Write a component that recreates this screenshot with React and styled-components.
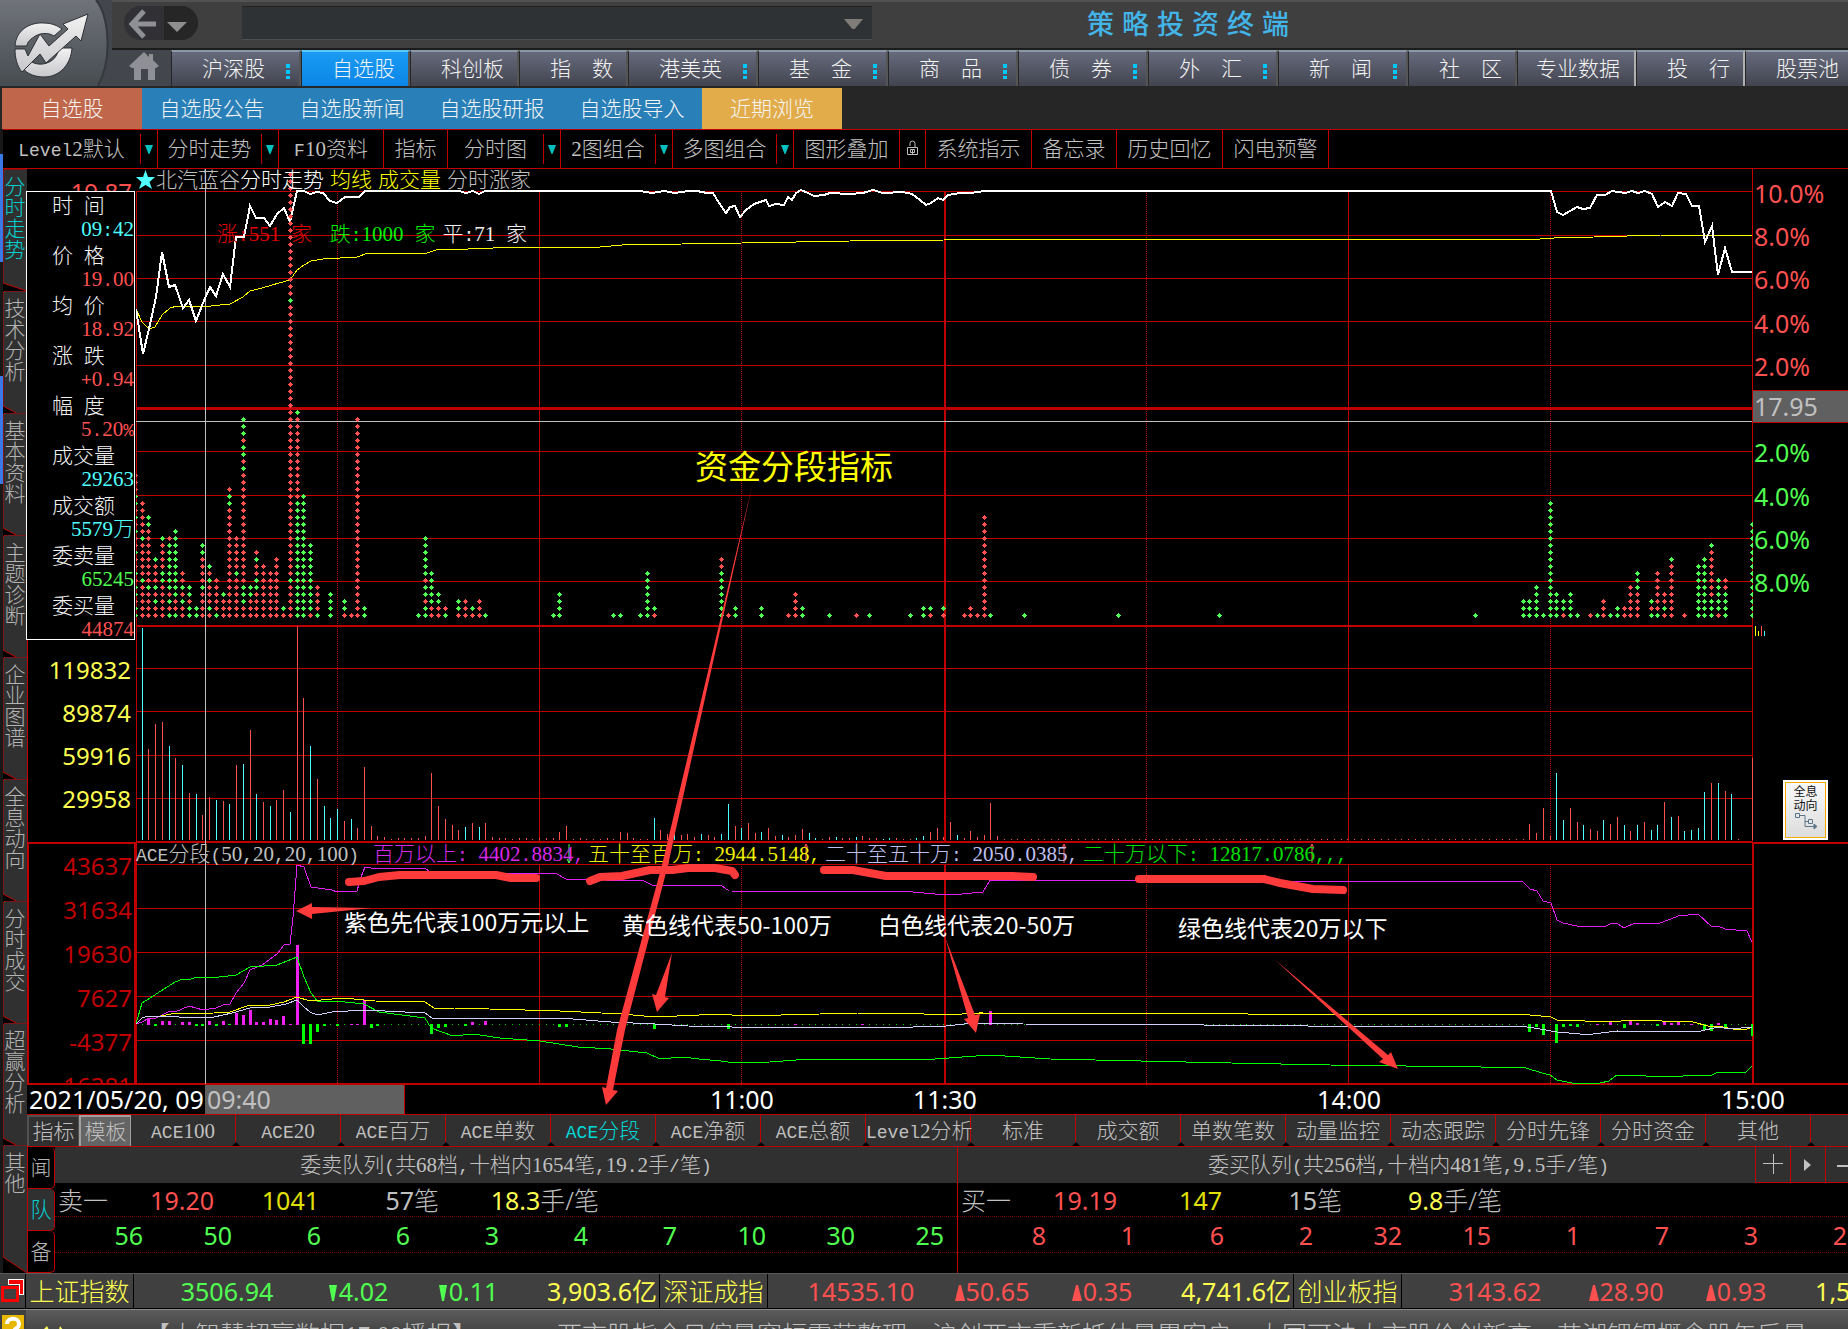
import React from 'react'
import styled, { createGlobalStyle, css } from 'styled-components'

const RED = '#c00000'
const SONG = '"Liberation Serif", "Noto Sans CJK SC", sans-serif'
const TAHOMA = '"Noto Sans", "Noto Sans CJK SC", sans-serif'

const GlobalStyle = createGlobalStyle`
  * {
    box-sizing: border-box;
  }
  body {
    margin: 0;
    background: #000;
    overflow: hidden;
  }
  button {
    margin: 0;
    padding: 0;
    border: none;
    background: none;
    color: inherit;
    font: inherit;
    cursor: pointer;
  }
`

const Page = styled.div`
  display: flex;
  flex-direction: column;
  height: 100vh;
  overflow: hidden;
  background: #000;
  color: #c0c0c0;
  font-family: ${SONG};
  font-size: 21px;
  font-weight: 300;
  line-height: 24px;
  white-space: pre;
`

// latin letters and punctuation take half of a full width character
const Half = styled.span`
  font-family: 'Liberation Mono', monospace;
  font-size: 18px;
  line-height: 1;
`

const Zh = ({ text }) =>
  text
    .split(/([\x20-\x2f\x3a-\x7e]+)/)
    .map((part, i) => (i % 2 ? <Half key={i}>{part}</Half> : part))

/* ---------- header ---------- */

const Header = styled.header`
  display: flex;
  flex: none;
  height: 88px;
  background: #3f3f3f;
  border-bottom: 2px solid #262626;
`

const HeaderMain = styled.div`
  display: flex;
  flex-direction: column;
  flex: 1;
  min-width: 0;
`

const TitleRow = styled.div`
  display: flex;
  align-items: center;
  height: 48px;
  padding-left: 12px;
  padding-bottom: 4px;
  border-top: 2px solid #525252;
`

const History = styled.div`
  display: flex;
  width: 74px;
  height: 34px;
  border-radius: 17px;
  overflow: hidden;
  background: #303035;

  button + button {
    background: #262626;
  }
`

const Picker = styled.label`
  position: relative;
  width: 630px;
  margin-left: 44px;
  height: 34px;

  select {
    width: 100%;
    height: 100%;
    appearance: none;
    border: none;
    border-top: 1px solid #222;
    border-bottom: 1px solid #4a4e50;
    background: #2e3234;
    color: #c0c0c0;
  }
  svg {
    position: absolute;
    right: 9px;
    top: 13px;
  }
`

const Brand = styled.h1`
  display: flex;
  gap: 8px;
  margin: 0 0 0 215px;
  color: #43b4e8;
  font-family: 'Noto Sans CJK SC', sans-serif;
  font-size: 27px;
  font-weight: 500;
  line-height: 32px;
`

const MainNav = styled.nav`
  display: flex;
  height: 38px;
  border-top: 2px solid #1c1c1c;
`

const HomeButton = styled.button`
  width: 59px;
  flex: none;
  padding-left: 16px;
  text-align: left;
  background: #43474d;
`

const MainTab = styled.button`
  position: relative;
  flex: none;
  width: ${({ $w }) => $w}px;
  padding-left: ${({ $w }) => ($w === 119 ? 18 : 30)}px;
  border-top: 2px solid #8a98a8;
  border-right: 2px solid ${({ $light }) => ($light ? '#b0b0b0' : '#555')};
  border-left: 1px solid #262626;
  background: linear-gradient(#666a7c, #42444f);
  color: #f4f4f4;
  text-align: left;

  ${({ $active }) =>
    $active &&
    css`
      border-top-color: #5cc8f8;
      background: linear-gradient(#1b9bf2, #0a86e8);
    `}
`

const Dots = styled.span`
  position: absolute;
  right: 9px;
  top: 12px;
  width: 4px;
  height: 15px;
  background: repeating-linear-gradient(#00c8ff 0 4px, transparent 4px 6px);
`

const SubNav = styled.nav`
  display: flex;
  flex: none;
  height: 41px;
  padding-left: 2px;
  background: #262626;
`

const subColors = { stock: '#c0664a', blue: '#2980b9', recent: '#e2ac4a' }

const SubTab = styled.button`
  width: 140px;
  background: ${({ $kind }) => subColors[$kind]};
  color: #f4f4f4;
`

/* ---------- tool bar and side tabs ---------- */

const Workspace = styled.div`
  display: flex;
  flex: none;
`

const Edge = styled.div`
  width: 3px;
  flex: none;
  background: linear-gradient(
    #181818 25px,
    #3b78e7 25px 133px,
    #181818 133px 247px,
    #3b78e7 247px 355px,
    #181818 355px
  );
`

const WorkMain = styled.div`
  flex: 1;
  min-width: 0;
`

const Toolbar = styled.div`
  display: flex;
  height: 40px;
  border-top: 1px solid ${RED};
  border-bottom: 1px solid ${RED};
`

const Tool = styled.button`
  flex: none;
  width: ${({ $w }) => $w}px;
  border-right: ${({ $menu }) => ($menu ? 'none' : `1px solid ${RED}`)};
`

const ToolMenu = styled.button`
  width: 17px;
  margin: 4px 0;
  border-left: 1px solid ${RED};
  line-height: 0;
`

const MenuEnd = styled.span`
  border-right: 1px solid ${RED};
`

const Body = styled.div`
  display: flex;
`

const Side = styled.nav`
  width: 24px;
  flex: none;
  background: #000;
`

const SideTab = styled.button`
  position: relative;
  display: block;
  width: 24px;
  height: ${({ $last }) => ($last ? 128 : 122)}px;
  line-height: 21px;
  color: ${({ $active }) => ($active ? '#00d0d0' : '#b4b4b4')};

  svg {
    position: absolute;
    left: 0;
    top: 0;
  }
  span {
    position: relative;
    display: block;
    height: 100%;
    padding-top: 8px;
    white-space: pre-line;
  }
`

const Content = styled.main`
  flex: 1;
  min-width: 0;
`

/* ---------- chart ---------- */

const ChartArea = styled.section`
  display: grid;
  grid-template-columns: 109px 1fr 95px;
  grid-template-rows: auto auto;
  font-family: ${TAHOMA};
`

const LeftAxis = styled.div`
  position: relative;
  grid-column: 1;
  grid-row: 1;
  display: flex;
  flex-direction: column;
  font-size: 24px;
  font-weight: 400;
  text-align: right;
`

const PriceTop = styled.div`
  height: 457px;
  padding: 8px 4px 0 0;
  line-height: 30px;
  color: #ff5050;
`

const VolumeLabels = styled.div`
  height: 216px;
  padding: 22px 5px 0 0;
  line-height: 43px;
  color: #ffff50;
  border-left: 1px solid ${RED};
`

const AceLabels = styled.div`
  height: 243px;
  overflow: hidden;
  padding-right: 2px;
  line-height: 44px;
  color: ${RED};
  border: 2px solid ${RED};
`

const InfoBox = styled.dl`
  position: absolute;
  left: -1px;
  top: 22px;
  width: 109px;
  height: 449px;
  margin: 0;
  border: 1px solid #fff;
  background: #000;
  font-family: ${SONG};
  font-size: 21px;
  font-weight: 300;
  line-height: 25px;
`

const InfoLabel = styled.dt`
  height: 25px;
  padding-left: 25px;
  line-height: 28px;
  text-align: left;
  color: #f4f4f4;
`

const InfoValue = styled.dd`
  height: 25px;
  margin: 0;
  color: ${({ $c }) => $c};
`

const PlotBox = styled.div`
  position: relative;
  grid-column: 2;
  grid-row: 1;
  font-family: ${SONG};

  > svg {
    display: block;
    width: 100%;
    height: 916px;
  }
`

const Tint = styled.span`
  color: ${({ $c }) => $c};
`

const Legend = styled.div`
  position: absolute;
  left: 0;
  top: 0;
  display: flex;
  align-items: center;
  gap: 6px;
  height: 22px;

  svg + span {
    margin-left: -5px;
  }
`

const Breadth = styled.div`
  position: absolute;
  left: 5%;
  top: 53px;
  display: flex;
  gap: 7px;
`

const AceLegend = styled.div`
  position: absolute;
  left: 0;
  top: 673px;
  display: grid;
  grid-template-columns: 237px 215px 237px 258px auto;
`

const RightAxis = styled.div`
  grid-column: 3;
  grid-row: 1;
  display: flex;
  flex-direction: column;
  font-size: 25px;
  font-weight: 400;
`

const Percents = styled.div`
  display: flex;
  flex-direction: column;
  height: 457px;
  padding: 2px 0 22px;
`

const Percent = styled.div`
  display: flex;
  flex: 1;
  align-items: center;
  padding-left: 1px;
  color: ${({ $down }) => ($down ? '#50ff50' : '#ff5050')};

  ${({ $base }) =>
    $base &&
    css`
      margin: 2px 0 8px;
      flex: 0 0 33px;
      background: #606060;
      color: #c0c0c0;
      border: solid ${RED};
      border-width: 1px 0;
    `}
`

const VolumeSide = styled.div`
  display: flex;
  flex-direction: column;
  justify-content: space-between;
  height: 216px;
  padding-left: 2px;
  padding-bottom: 2px;
`

const HoloButton = styled.button`
  width: 45px;
  height: 60px;
  margin-left: 28px;
  padding-bottom: 6px;
  border: 2px solid #fff;
  outline: 1px solid #f5a800;
  outline-offset: -3px;
  background: linear-gradient(#fafafa, #dcdcdc);
  color: #111;
  font-family: 'Noto Sans CJK SC', sans-serif;
  font-size: 12px;
  line-height: 14px;

  svg {
    display: block;
    margin: 0 auto;
  }
`

const AceSide = styled.div`
  height: 243px;
  border: solid ${RED};
  border-width: 2px 0 2px 1px;
`

const TimeAxis = styled.div`
  position: relative;
  grid-column: 1 / 4;
  grid-row: 2;
  display: flex;
  height: 30px;
  border-bottom: 1px solid ${RED};
  color: #fff;
  font-size: 25px;
  font-weight: 400;
  line-height: 29px;
`

const DateLabel = styled.span`
  width: 178px;
  padding-left: 2px;
  overflow: hidden;
`

const HoverTime = styled.span`
  width: 200px;
  padding-left: 2px;
  background: #606060;
  color: #c0c0c0;
  border-right: 1px solid ${RED};
`

const Tick = styled.span`
  position: absolute;
  left: ${({ $at }) => $at}%;
  transform: translateX(-50%);
`

const Notes = styled.div`
  grid-column: 2;
  grid-row: 1 / 3;
  position: relative;
  pointer-events: none;

  svg {
    display: block;
    width: 100%;
    height: 946px;
  }
`

const Note = styled.p`
  position: absolute;
  left: ${({ $x }) => $x}%;
  top: ${({ $y }) => $y}px;
  margin: 0;
  color: ${({ $big }) => ($big ? '#ffff00' : '#fff')};
  font-family: 'Noto Sans CJK SC', sans-serif;
  font-size: ${({ $big }) => ($big ? 33 : 23)}px;
  font-weight: 400;
  line-height: ${({ $big }) => ($big ? 40 : 28)}px;
`

/* ---------- indicator tabs and order queue ---------- */

const IndicatorTabs = styled.nav`
  display: flex;
  height: 32px;
  overflow: hidden;
  background: #303030;
  border-bottom: 1px solid ${RED};
`

const IndicatorTab = styled.button`
  position: relative;
  flex: none;
  width: 105px;
  border-right: 1px solid ${RED};
  color: ${({ $active }) => ($active ? '#00d8d8' : 'inherit')};

  &::after {
    content: '';
    position: absolute;
    right: -6px;
    bottom: -1px;
    border: 5px solid transparent;
    border-top: none;
    border-bottom-color: #000;
    z-index: 1;
  }
`

const ModeTab = styled.button`
  flex: none;
  width: 52px;
  background: ${({ $on }) => ($on ? '#646464' : '#303030')};
  border: solid ${({ $on }) => ($on ? '#a0a0a0' : '#505050')};
  border-width: 2px 1px 0 2px;
`

const Queue = styled.section`
  display: flex;
  height: 126px;
`

const QueueNav = styled.nav`
  display: flex;
  flex-direction: column;
  width: 28px;
  flex: none;
`

const QueueTab = styled.button`
  flex: 1;
  border: solid ${RED};
  border-width: 0 1px 1px 1px;
  border-radius: 0 5px 5px 0;
  background: ${({ $active }) => ($active ? '#303030' : '#000')};
  color: ${({ $active }) => ($active ? '#00d0d0' : '#b4b4b4')};
`

const QueuePanels = styled.div`
  position: relative;
  display: grid;
  flex: 1;
  grid-template-columns: repeat(2, minmax(902px, 1fr));
  overflow: hidden;
`

const QueuePanel = styled.div`
  font-family: ${TAHOMA};
  font-size: 25px;
  font-weight: 400;

  & + & {
    border-left: 1px solid ${RED};
  }
`

const QueueTitle = styled.h2`
  margin: 0;
  height: 36px;
  background: #303030;
  font-family: ${SONG};
  font-size: 21px;
  font-weight: 300;
  line-height: 36px;
  text-align: center;
`

const Summary = styled.div`
  display: grid;
  grid-template-columns: 55px 104px 105px 120px 160px;
  height: 34px;
  line-height: 34px;
  text-align: right;
  border-bottom: 1px dotted #700000;

  > span:first-child {
    padding-left: 3px;
    text-align: left;
  }
`

const Song = styled.span`
  color: #c0c0c0;
  font-weight: 300;
`

const Lots = styled.div`
  display: grid;
  grid-template-columns: 88px repeat(9, 89px);
  height: 36px;
  line-height: 36px;
  text-align: right;
  color: ${({ $c }) => $c};
  border-bottom: 1px dotted #700000;
`

const Zoomers = styled.div`
  position: absolute;
  right: 0;
  top: 0;
  display: flex;
  width: 93px;
  height: 36px;
  overflow: hidden;
  background: #303030;

  button {
    flex: 0 0 35px;
    border: solid ${RED};
    border-width: 0 0 1px 1px;
    line-height: 0;
  }
`

/* ---------- bottom bars ---------- */

const Ticker = styled.footer`
  display: flex;
  flex: none;
  height: 36px;
  overflow: hidden;
  background: #404040;
  border-top: 1px solid #5a5a5a;
  border-bottom: 1px solid #000;
`

const TickerIcon = styled.button`
  width: 26px;
  flex: none;
  border-right: 1px solid #000;
  line-height: 0;
`

const IndexGroup = styled.div`
  display: grid;
  flex: none;
  grid-template-columns: 108px 186px 76px 144px 119px;
  width: 634px;
  border-right: 1px solid #000;
  font-family: ${TAHOMA};
  font-size: 25px;
  font-weight: 400;
  line-height: 34px;
  text-align: center;
  color: ${({ $down }) => ($down ? '#50ff50' : '#ff5050')};
`

const IndexName = styled.span`
  border-right: 1px solid #000;
  color: #ffff50;
  font-weight: 300;
`

const Amount = styled.span`
  padding-right: 2px;
  text-align: right;
  color: #ffff50;
`

const Marker = styled.svg`
  width: 10px;
  height: 16px;
  margin-right: 1px;
`

const News = styled.div`
  display: flex;
  flex: none;
  height: 40px;
  border-top: 1px solid #8a8a8a;
  background: linear-gradient(#5c5c5c, #303030);
  font-size: 25px;
  line-height: 36px;
`

const Help = styled.button`
  width: 26px;
  flex: none;
  background: #404040;
  line-height: 0;
`

const Flash = styled.span`
  width: 119px;
  padding-left: 14px;
  flex: none;
  color: #ffff50;
`

const Headline = styled.a`
  margin: 6px 80px 0 0;
  padding-top: 2px;
  color: #c0c0c0;
  text-decoration: none;
`

/* ---------- data ---------- */

const mainTabs = [
  ['沪深股', 130, true],
  ['自选股', 109],
  ['科创板', 109],
  ['指　数', 109],
  ['港美英', 130, true],
  ['基　金', 130, true],
  ['商　品', 130, true],
  ['债　券', 130, true],
  ['外　汇', 130, true],
  ['新　闻', 130, true],
  ['社　区', 109],
  ['专业数据', 119],
  ['投　行', 109],
  ['股票池', 130],
]

const subTabs = ['自选股', '自选股公告', '自选股新闻', '自选股研报', '自选股导入', '近期浏览']

const tools = [
  ['Level2默认', 137, true],
  ['分时走势', 103, true],
  ['F10资料', 105],
  ['指标', 64],
  ['分时图', 95, true],
  ['2图组合', 94, true],
  ['多图组合', 103, true],
  ['图形叠加', 106],
  ['lock', 26],
  ['系统指示', 106],
  ['备忘录', 85],
  ['历史回忆', 106],
  ['闪电预警', 106],
]

const sideTabs = ['分时走势', '技术分析', '基本资料', '主题诊断', '企业图谱', '全息动向', '分时成交', '超赢分析', '其他']

const info = [
  ['时 间', '09:42', '#50ffff'],
  ['价 格', '19.00', '#ff5050'],
  ['均 价', '18.92', '#ff5050'],
  ['涨 跌', '+0.94', '#ff5050'],
  ['幅 度', '5.20%', '#ff5050'],
  ['成交量', '29263', '#50ffff'],
  ['成交额', '5579万', '#50ffff'],
  ['委卖量', '65245', '#50ff50'],
  ['委买量', '44874', '#ff5050'],
]

const indicators = [
  'ACE100', 'ACE20', 'ACE百万', 'ACE单数', 'ACE分段', 'ACE净额', 'ACE总额', 'Level2分析',
  '标准', '成交额', '单数笔数', '动量监控', '动态跟踪', '分时先锋', '分时资金', '其他', '',
]

const ticks = [
  ['11:00', 39.26],
  ['11:30', 50.41],
  ['14:00', 72.6],
  ['15:00', 94.78],
]

const queues = [
  {
    title: '委卖队列(共68档,十档内1654笔,19.2手/笔)',
    side: '卖一',
    price: '19.20',
    volume: '1041',
    count: '57',
    average: '18.3',
    color: '#50ff50',
    lots: [56, 50, 6, 6, 3, 4, 7, 10, 30, 25],
  },
  {
    title: '委买队列(共256档,十档内481笔,9.5手/笔)',
    side: '买一',
    price: '19.19',
    volume: '147',
    count: '15',
    average: '9.8',
    color: '#ff5050',
    lots: [8, 1, 6, 2, 32, 15, 1, 7, 3, 2],
  },
]

const indexes = [
  ['上证指数', '3506.94', '4.02', '0.11', '3,903.6', true],
  ['深证成指', '14535.10', '50.65', '0.35', '4,741.6'],
  ['创业板指', '3143.62', '28.90', '0.93', '1,562.4'],
]

const priceLine =
  '136,309 138,322 143,354 149,329 156,297 162,252 169,287 175,285 183,308 189,300 196,321 203,303 210,287 216,296 223,274 230,287 236,237 244,237 250,206 256,218 264,218 270,226 277,214 284,208 290,222 297,191 304,191 310,194 317,192 323,193 330,201 337,203 345,197 359,197 365,191 459,191 466,193 473,191 479,194 485,191 640,191 652,193 664,191 675,193 688,191 697,191 707,193 713,193 719,203 726,213 730,207 735,206 740,217 746,210 754,204 766,200 769,206 776,204 784,205 788,197 792,200 796,193 801,190 808,193 814,196 824,195 830,193 850,194 863,193 873,190 883,193 903,192 912,194 920,200 926,205 931,203 938,198 943,200 948,195 960,193 970,193 985,191 1551,191 1557,212 1563,215 1577,207 1583,209 1590,208 1597,195 1605,195 1612,191 1625,193 1632,191 1638,193 1645,191 1652,194 1658,207 1665,202 1672,206 1678,193 1686,194 1692,206 1699,206 1705,242 1712,226 1718,275 1725,248 1732,272 1752,272'

const averageLine =
  '136,309 142,322 149,329 155,327 162,315 170,308 177,306 211,306 230,304 243,297 250,291 262,288 279,283 290,280 297,270 304,265 311,261 323,259 357,257 368,253 427,253 436,250 468,249 518,247 600,247 622,245 742,243 850,241 944,240 1380,239 1540,239 1554,238 1594,237 1661,235 1752,235'

const aceLines = {
  '#e020f0':
    '136,1024 142,1022 149,1018 156,1018 162,1015 170,1011 175,1012 189,1006 203,1010 216,1008 223,1005 230,1004 236,993 244,983 250,970 262,965 277,954 284,945 290,944 293,917 297,865 304,867 311,887 332,890 337,892 357,891 361,877 365,867 371,868 425,868 431,873 555,873 566,879 644,881 652,885 721,885 729,891 913,892 935,894 962,894 983,892 990,880 1121,880 1143,881 1523,882 1530,889 1537,891 1543,901 1551,903 1557,920 1563,923 1577,926 1591,927 1597,926 1604,927 1612,923 1618,924 1624,928 1635,923 1658,924 1665,921 1671,919 1678,916 1698,914 1712,927 1718,926 1725,929 1747,931 1752,942',
  '#00ff00':
    '136,1024 142,1003 150,998 175,982 183,979 189,980 196,977 211,978 236,975 250,967 264,966 277,965 297,957 304,977 311,993 317,1001 323,1002 336,1001 364,1004 379,1012 425,1018 431,1028 453,1036 473,1034 500,1038 540,1041 578,1047 611,1049 647,1053 660,1059 683,1057 699,1059 721,1061 735,1063 770,1062 809,1059 935,1059 990,1055 1050,1059 1231,1063 1330,1065 1481,1067 1526,1068 1542,1073 1550,1075 1557,1080 1572,1083 1600,1083 1609,1081 1617,1075 1637,1075 1655,1077 1712,1075 1718,1072 1746,1072 1752,1066',
  '#ffff00':
    '136,1024 142,1018 148,1016 161,1016 171,1014 214,1013 230,1012 250,1005 270,1005 284,1002 297,997 310,1001 343,998 375,1001 425,1002 434,1008 454,1008 560,1011 622,1014 655,1017 721,1014 743,1016 858,1013 902,1013 946,1015 979,1013 1248,1014 1520,1014 1551,1017 1557,1020 1613,1022 1630,1020 1693,1022 1708,1026 1718,1026 1733,1029 1747,1029 1752,1027',
  '#d0d0ff':
    '136,1024 142,1018 148,1016 179,1017 214,1017 232,1013 250,1008 270,1007 286,1004 297,1000 304,1007 310,1012 317,1015 332,1012 364,1010 425,1013 432,1018 560,1018 611,1022 655,1024 688,1026 732,1027 913,1027 946,1026 973,1023 1023,1024 1204,1025 1308,1026 1527,1027 1540,1029 1557,1032 1580,1034 1593,1034 1617,1031 1697,1032 1718,1027 1730,1029 1752,1027',
}

// minute: runs of red and green marks, from the bottom up
const markRuns = {
  0: 'g2r1g2r1g1r2g1r2g1r1g1r1g2r3', 1: 'r5g1r5g1r5', 2: 'r4g1r8g2', 3: 'r2g1r1g1r3g1', 4: 'r5g2r4g1',
  5: 'g1r1g1r1g7r1', 6: 'g1r2g10', 7: 'r2g1r1g1r2', 8: 'g2r1g2', 9: 'g2', 10: 'r4g1r4g2', 11: 'r1g1r3g1r1g1',
  12: 'g1r5', 13: 'r3g1', 14: 'r16g2r1', 15: 'r6g1r5', 16: 'r2g3r16g1r1g2r1g3', 17: 'r3g2', 18: 'r4g2r2g1r1',
  19: 'r8', 20: 'r7', 21: 'r9', 22: 'r1g1', 23: 'r5g1r39g1r18', 24: 'g17r12g1', 25: 'g18', 26: 'r1g10',
  27: 'g1r4', 29: 'g4', 31: 'r1g2', 32: 'r1', 33: 'r29', 34: 'g2', 42: 'g1', 43: 'g2r1g2r1g6', 44: 'r2g5',
  45: 'r2g2', 46: 'g1r1', 48: 'r1g2', 49: 'r3', 50: 'r1g1', 51: 'r3', 52: 'g1', 62: 'g1', 63: 'g4', 71: 'g1',
  72: 'g1', 75: 'g1', 76: 'g7', 77: 'r1g1', 87: 'g7r2', 88: 'r1', 89: 'g2', 93: 'g2', 97: 'r1', 98: 'r4',
  99: 'g2', 103: 'g1', 107: 'r1', 109: 'g1', 115: 'g1', 117: 'g2', 118: 'r1g1', 120: 'r1g1', 123: 'r1',
  124: 'r2', 125: 'r1', 126: 'r15', 127: 'g1', 132: 'g1', 146: 'g1', 161: 'g1', 199: 'g1', 206: 'g3',
  207: 'g3', 208: 'g5', 209: 'g1', 210: 'g17', 211: 'g4', 212: 'r1g2', 213: 'g4', 214: 'g1', 216: 'r1',
  217: 'g1', 218: 'r3', 219: 'g1', 220: 'g2', 221: 'r2', 222: 'r5', 223: 'r4g3', 225: 'g1r1g1', 226: 'g1r6',
  227: 'r1g1r2', 228: 'r8g1', 230: 'r1', 232: 'g8', 233: 'g9', 234: 'g3r7g1', 235: 'r1g5', 236: 'g4r2',
  240: 'g14',
}

// one bar a minute from 09:31, c is a falling minute and r a rising one
const volumeOpen =
  'c212 r91 r116 r118 c94 r82 c75 r47 c46 r25 r43 c40 r39 c36 r75 c76 r110 c46 r38 c34 r40 r50 c28 r214 r142 c94 r61 c34 c22 c31 r19 c21 r12 r73 r14 r4 r3 r1 r2 r2 r2 r2 r4 r67 r34 r21 r15 r10 c13 r17 c13 r17 r3 r2 r2 r1 r2 r2 r1 r2 r2 r2 r8 r14 r1 r2 r1 r1 r1 r2 r1 r8 r7 r2 r1 r1 c22 r10 r6 c6 r5 r6 r3 c6 r5 r3 c6 c36 r14 c12 r17 r7 c8 r12 r4 c5 r3 r5 r11 c7 c2 r1 r3 c3 r2 r2 c3 r4 r2 r2 c1 c2 r2 r1 r1 c2 c4 r8 r12 r3 r18 c5 r2 r9 r3 r5 r37 r4'
const volumeClose =
  'r16 r7 r32 r4 c67 c20 r32 r18 c15 r11 r9 c20 r16 r23 c15 r9 c15 r18 c10 c15 r38 c23 r24 c9 c10 c12 c48 r57 c57 r49 c46 r1 r0 r82'
const volumes = [...volumeOpen.split(' '), ...Array(78).fill('r1'), ...volumeClose.split(' ')]

const inflow = {
  2: 6, 4: 4, 5: 4, 7: 3, 8: 3, 11: 4, 13: 4, 15: 12, 16: 10, 17: 15, 18: 3, 19: 3, 20: 6, 21: 5, 22: 9, 23: 1,
  24: 80, 32: 1, 33: 1, 34: 25, 46: 1, 50: 3, 52: 4, 78: 1, 98: 1, 108: 1, 127: 14, 217: 1, 219: 4, 222: 4,
  223: 2, 227: 4, 228: 2, 229: 4, 231: 1, 235: 2,
}
const outflow = {
  3: 2, 9: 2, 10: 2, 12: 2, 14: 1, 25: 20, 26: 20, 27: 8, 28: 2, 30: 2, 35: 4, 36: 2, 44: 10, 45: 4, 46: 3,
  49: 2, 63: 3, 64: 3, 77: 5, 88: 5, 207: 8, 208: 3, 209: 11, 211: 19, 212: 3, 213: 2, 214: 3, 221: 4, 226: 2,
  233: 6, 234: 7, 236: 3, 240: 12,
}

const minuteX = (n) => Math.floor(135.5 + n * 6.736)

const marks = Object.entries(markRuns).flatMap(([n, runs]) => {
  const colors = [...runs.matchAll(/([rg])(\d+)/g)].flatMap(([, c, k]) => Array(+k).fill(c))
  return colors.map((c, i) => ({ c, x: minuteX(+n), y: 615 - i * 7 }))
})

const markPath = (color) =>
  marks
    .filter(({ c }) => c === color)
    .map(({ x, y }) => `M${x - 2} ${y}h1v-1h1v-1h1v1h1v1h1v1h-1v1h-1v1h-1v-1h-1v-1h-1z`)
    .join('')

/* ---------- parts ---------- */

const Caret = ({ color = '#00c0c0', w = 8, h = 9 }) => (
  <svg width={w} height={h} viewBox="0 0 8 9" preserveAspectRatio="none" aria-hidden="true">
    <path d="M0 0h8L4.500 9h-1z" fill={color} />
  </svg>
)

const Logo = () => (
  <svg width="112" height="86" viewBox="0 0 112 86" aria-label="logo">
    <defs>
      <linearGradient id="logoBg" x2="0" y2="1">
        <stop offset="0" stopColor="#70747a" />
        <stop offset="1" stopColor="#474c51" />
      </linearGradient>
      <linearGradient id="logoFg" x2="0" y2="1">
        <stop offset="0" stopColor="#f2f2f2" />
        <stop offset="1" stopColor="#c8c8cc" />
      </linearGradient>
    </defs>
    <path d="M0 0h112v86H0z" fill="#43474d" />
    <path d="M0 0h96c12 16 16 58 2 86H0z" fill="url(#logoBg)" />
    <path d="M96 0c13 16 17 58 2 86" fill="none" stroke="#35383c" strokeWidth="2" />
    <g fill="url(#logoFg)" stroke="#2c2f33" strokeWidth="1">
      <path d="M15 46C16 30 30 22 44 23c8 0 14 3 18 6l-8 7c-6-4-15-3-20 1-5 3-7 6-7 9z" />
      <path d="M72 48c-1 16-12 29-28 29-10 0-18-4-20-8l8-7c5 3 13 3 19-1 5-3 7-8 8-13z" />
      <path d="M15 49l10 0 3 7 12-22 9 12 19-17-5-5 25-10-7 27-5-5-30 27-6-9-18 18c-5-6-7-14-7-23z" />
    </g>
  </svg>
)

const LockIcon = () => (
  <svg width="13" height="16" viewBox="0 0 13 16" fill="none" stroke="#c0c0c0" aria-hidden="true">
    <path d="M4 6V3.500a2.500 2.500 0 0 1 5 0V7M1.500 7.500h10v7h-10zM4.500 9.500h4v3h-4zM6.500 9v5" />
  </svg>
)

const SideShape = ({ active, last }) => {
  const h = last ? 128 : 122
  const cut = last ? 112 : active ? 114 : 115
  const end = active || last ? 24 : 13
  return (
    <svg width="24" height={h} aria-hidden="true">
      <path d={`M0 2L2 0H24V${h}H${end}L0 ${cut}z`} fill="#303030" />
      <path d={`M24 0H2L0 2V${cut}L${end} ${h}`} fill="none" stroke={RED} />
    </svg>
  )
}

const Plot = () => (
  <svg viewBox="136 169 1617 916" preserveAspectRatio="none" aria-label="分时走势图">
    <g stroke={RED} shapeRendering="crispEdges">
      {[191, 235, 278, 321, 365, 451, 495, 538, 581, 668, 711, 755, 798, 864, 908, 952, 996, 1040].map((y) => (
        <line key={y} x1="136" x2="1753" y1={y + 0.5} y2={y + 0.5} />
      ))}
      <line x1="136" x2="1753" y1="408.500" y2="408.500" strokeWidth="3" />
      {[626, 842, 1084].map((y) => (
        <line key={y} x1="136" x2="1753" y1={y} y2={y} strokeWidth="2" />
      ))}
      {[337, 741, 1146, 1550].map((x) => (
        <path key={x} d={`M${x + 0.5} 191V842M${x + 0.5} 864V1084`} strokeDasharray="1 1" />
      ))}
      {[539, 1348].map((x) => (
        <path key={x} d={`M${x + 0.5} 191V842M${x + 0.5} 864V1084`} />
      ))}
      <path d="M945 191V842M945 864V1084" strokeWidth="2" />
      <path d="M136.500 191V1084M1752.500 169V1084" />
    </g>
    <path d="M205.500 169V1084M136 421.500H1752" stroke="#c0c0c0" shapeRendering="crispEdges" />
    <g shapeRendering="crispEdges">
      {volumes.map((bar, i) => {
        const h = Number(bar.slice(1))
        return (
          <rect
            key={i}
            x={Math.min(minuteX(i + 1), 1752)}
            y={840 - h}
            width="1"
            height={h}
            fill={bar[0] === 'c' ? '#50ffff' : '#ff5050'}
          />
        )
      })}
      {Array.from({ length: 239 }, (_, i) => (
        <rect key={i} x={minuteX(i + 1)} y="1024" width="1" height="1" fill="#00d000" />
      ))}
      {Object.entries(inflow).map(([n, h]) => (
        <rect key={n} x={minuteX(+n) - 1} y={1025 - h} width="3" height={h} fill="#f020f0" />
      ))}
      {Object.entries(outflow).map(([n, h]) => (
        <rect key={n} x={minuteX(+n) - 1} y="1024" width="3" height={h} fill="#00ff00" />
      ))}
    </g>
    <g fill="none">
      {Object.entries(aceLines).map(([color, points]) => (
        <polyline key={color} points={points} stroke={color} shapeRendering="crispEdges" />
      ))}
      <polyline points={averageLine} stroke="#ffff00" shapeRendering="crispEdges" />
      <polyline points={priceLine} stroke="#fff" strokeWidth="2" shapeRendering="crispEdges" />
    </g>
    <path d={markPath('r')} fill="#ff5050" />
    <path d={markPath('g')} fill="#50ff50" />
    <path d="M569 844v19m-2-4l2 4 2-4" stroke="#50ff50" fill="none" />
    <path d="M806 863v-19m-2 4l2-4 2 4M1064 863v-19m-2 4l2-4 2 4M1312 863v-19m-2 4l2-4 2 4" stroke="#ff5050" fill="none" />
  </svg>
)

const noteX = (x) => ((x - 136) / 1617) * 100

const Annotations = () => (
  <Notes>
    <Note $big $x={noteX(695)} $y={276}>资金分段指标</Note>
    <Note $x={noteX(344)} $y={738}>紫色先代表100万元以上</Note>
    <Note $x={noteX(622)} $y={741}>黄色线代表50-100万</Note>
    <Note $x={noteX(878)} $y={741}>白色线代表20-50万</Note>
    <Note $x={noteX(1178)} $y={744}>绿色线代表20万以下</Note>
    <svg viewBox="136 169 1617 946" preserveAspectRatio="none" aria-hidden="true">
      <g fill="#ff3a3a">
        <path d="M753 482L668 865 625 1030 613 1090l5 1-12 14-4-18 4 1 11-58 45-165z" />
        <path d="M672 953L665 997l4 1-12 14-5-18 4 1z" />
        <path d="M945 937L975 1015l5-1-4 19-12-14 4-1z" />
        <path d="M1274 959L1388 1055l3-3 7 17-19-7 4-3z" />
        <path d="M296 911l16-8v4l60 1-60 6v5z" />
      </g>
      <g fill="none" stroke="#ff3a3a" strokeWidth="8" strokeLinecap="round" strokeLinejoin="round">
        <path d="M349 882L364 881 379 877 400 875H496L511 878H536" />
        <path d="M590 881L600 877 622 876 650 870H672L688 868H715L732 871 735 875" />
        <path d="M824 870H853L886 876H1012L1033 877" />
        <path d="M1139 879H1264L1280 883 1313 889 1343 890" />
      </g>
    </svg>
  </Notes>
)

const Chart = () => (
  <ChartArea>
    <LeftAxis>
      <PriceTop>19.87</PriceTop>
      <VolumeLabels>
        {[119832, 89874, 59916, 29958].map((v) => (
          <div key={v}>{v}</div>
        ))}
      </VolumeLabels>
      <AceLabels>
        {['43637', '31634', '19630', '7627', '-4377', '-16381'].map((v) => (
          <div key={v}>{v}</div>
        ))}
      </AceLabels>
      <InfoBox>
        {info.map(([label, value, color]) => (
          <React.Fragment key={label}>
            <InfoLabel><Zh text={label} /></InfoLabel>
            <InfoValue $c={color}><Zh text={value} /></InfoValue>
          </React.Fragment>
        ))}
      </InfoBox>
    </LeftAxis>
    <PlotBox>
      <Plot />
      <Legend>
        <svg width="19" height="20" viewBox="0 0 19 20" aria-hidden="true">
          <path d="M9.500 0l2.500 7h7l-5.500 5L16 19l-6.500-4L3 19l2.500-7L0 7h7z" fill="#50ffff" />
        </svg>
        <Tint $c="#c0c0c0">北汽蓝谷<Tint $c="#fff">分时走势</Tint></Tint>
        <Tint $c="#ffff00">均线</Tint>
        <Tint $c="#ffff00">成交量</Tint>
        <Tint $c="#c0c0c0">分时涨家</Tint>
      </Legend>
      <Breadth>
        <Tint $c="#e00000"><Zh text="涨:551 家 " /></Tint>
        <Tint $c="#00f000"><Zh text="跌:1000 家" /></Tint>
        <Tint $c="#f0f0f0"><Zh text="平:71 家" /></Tint>
      </Breadth>
      <AceLegend>
        <Tint $c="#c0c0c0"><Zh text="ACE分段(50,20,20,100)" /></Tint>
        <Tint $c="#d828e8"><Zh text="百万以上: 4402.8834," /></Tint>
        <Tint $c="#f0f000"><Zh text="五十至百万: 2944.5148," /></Tint>
        <Tint $c="#c0c0f0"><Zh text="二十至五十万: 2050.0385," /></Tint>
        <Tint $c="#00e000"><Zh text="二十万以下: 12817.0786,,," /></Tint>
      </AceLegend>
    </PlotBox>
    <RightAxis>
      <Percents>
        {['10.0%', '8.0%', '6.0%', '4.0%', '2.0%'].map((v) => (
          <Percent key={v}>{v}</Percent>
        ))}
        <Percent $base>17.95</Percent>
        {['2.0%', '4.0%', '6.0%', '8.0%'].map((v) => (
          <Percent key={v} $down>{v}</Percent>
        ))}
      </Percents>
      <VolumeSide>
        <svg width="12" height="10" shapeRendering="crispEdges" aria-hidden="true">
          <path d="M0 0h1v10h-1zM3 5h1v5h-1z" fill="#ffff00" />
          <path d="M6 0h1v10h-1z" fill="#ff5050" />
          <path d="M9 5h1v5h-1z" fill="#50ffff" />
        </svg>
        <HoloButton>
          全息<br />动向
          <svg width="24" height="18" viewBox="0 0 24 18" fill="none" stroke="#5c7488" aria-hidden="true">
            <path d="M1.500 1.500h4v4h-4zM6 3.500h5v11h9M11 9.500h3M14.500 7.500h4v4h-4z" />
            <path d="M20 12l3 2.500-3 2.500z" fill="#5c7488" />
          </svg>
        </HoloButton>
      </VolumeSide>
      <AceSide />
    </RightAxis>
    <TimeAxis>
      <DateLabel>2021/05/20, 09</DateLabel>
      <HoverTime>09:40</HoverTime>
      {ticks.map(([time, at]) => (
        <Tick key={time} $at={at}>{time}</Tick>
      ))}
    </TimeAxis>
    <Annotations />
  </ChartArea>
)

const OrderQueue = () => (
  <Queue>
    <QueueNav>
      <QueueTab>闻</QueueTab>
      <QueueTab $active>队</QueueTab>
      <QueueTab>备</QueueTab>
    </QueueNav>
    <QueuePanels>
      {queues.map((q) => (
        <QueuePanel key={q.side}>
          <QueueTitle><Zh text={q.title} /></QueueTitle>
          <Summary>
            <Song>{q.side}</Song>
            <Tint $c="#ff5050">{q.price}</Tint>
            <Tint $c="#e0e000">{q.volume}</Tint>
            <span>{q.count}<Song>笔</Song></span>
            <Tint $c="#ffff50">{q.average}<Song>手/笔</Song></Tint>
          </Summary>
          <Lots $c={q.color}>
            {q.lots.map((lot, i) => (
              <span key={i}>{lot}</span>
            ))}
          </Lots>
        </QueuePanel>
      ))}
      <Zoomers>
        <button aria-label="放大">
          <svg width="21" height="21" stroke="#c0c0c0"><path d="M0 9.500h20M10.500 0v20" /></svg>
        </button>
        <button aria-label="下一页">
          <svg width="8" height="12"><path d="M0 0l7 6-7 6z" fill="#c0c0c0" /></svg>
        </button>
        <button aria-label="缩小">
          <svg width="12" height="3"><path d="M0 0h12v2H0z" fill="#c0c0c0" /></svg>
        </button>
      </Zoomers>
    </QueuePanels>
  </Queue>
)

const App = () => {
  return (
    <Page>
      <GlobalStyle />
      <Header>
        <Logo />
        <HeaderMain>
          <TitleRow>
            <History>
              <button aria-label="后退">
                <svg width="40" height="34" aria-hidden="true">
                  <path d="M20 5L8 18l12 13M9 18h23" fill="none" stroke="#8e9095" strokeWidth="5" />
                </svg>
              </button>
              <button aria-label="历史">
                <svg width="34" height="34" aria-hidden="true">
                  <path d="M3 16h20L13 26z" fill="#8e8e8e" />
                </svg>
              </button>
            </History>
            <Picker>
              <select aria-label="功能选择" defaultValue="">
                <option value=""></option>
              </select>
              <Caret color="#807c78" w={19} h={10} />
            </Picker>
            <Brand>
              {[...'策略投资终端'].map((c) => (
                <span key={c}>{c}</span>
              ))}
            </Brand>
          </TitleRow>
          <MainNav>
            <HomeButton aria-label="首页">
              <svg width="32" height="30" viewBox="0 0 32 30" aria-hidden="true">
                <path d="M1 15L16 1l5 5V3h4v6l6 6-3 2h-1v12h-7V18h-7v11H6V17H4z" fill="#8e9095" />
              </svg>
            </HomeButton>
            {mainTabs.map(([label, w, menu]) => (
              <MainTab key={label} $w={w} $active={label === '自选股'} $light={['专业数据', '投　行'].includes(label)}>
                {label}
                {menu && <Dots />}
              </MainTab>
            ))}
          </MainNav>
        </HeaderMain>
      </Header>
      <SubNav>
        {subTabs.map((label, i) => (
          <SubTab key={label} $kind={i === 0 ? 'stock' : i === 5 ? 'recent' : 'blue'}>
            {label}
          </SubTab>
        ))}
      </SubNav>
      <Workspace>
        <Edge />
        <WorkMain>
          <Toolbar>
            {tools.map(([label, w, menu]) => (
              <React.Fragment key={label}>
                <Tool $w={w} $menu={menu} aria-label={label}>
                  {label === 'lock' ? <LockIcon /> : <Zh text={label} />}
                </Tool>
                {menu && (
                  <>
                    <ToolMenu aria-label={`${label}菜单`}>
                      <Caret />
                    </ToolMenu>
                    <MenuEnd />
                  </>
                )}
              </React.Fragment>
            ))}
          </Toolbar>
          <Body>
            <Side>
              {sideTabs.map((label, i) => (
                <SideTab key={label} $active={i === 0} $last={i === 8}>
                  <SideShape active={i === 0} last={i === 8} />
                  <span>{[...label].join('\n')}</span>
                </SideTab>
              ))}
            </Side>
            <Content>
              <Chart />
              <IndicatorTabs>
                <ModeTab>指标</ModeTab>
                <ModeTab $on>模板</ModeTab>
                {indicators.map((label) => (
                  <IndicatorTab key={label} $active={label === 'ACE分段'}>
                    <Zh text={label} />
                  </IndicatorTab>
                ))}
              </IndicatorTabs>
              <OrderQueue />
            </Content>
          </Body>
        </WorkMain>
      </Workspace>
      <Ticker>
        <TickerIcon aria-label="窗口">
          <svg width="24" height="26" shapeRendering="crispEdges" aria-hidden="true">
            <path d="M7 1h15v15h-4v-10h-11z" fill="#f00" stroke="#fff" />
            <path d="M1.500 9.500h15v13h-15z" fill="#404040" stroke="#f00" strokeWidth="3" />
          </svg>
        </TickerIcon>
        {indexes.map(([name, price, change, pct, amount, down]) => (
          <IndexGroup key={name} $down={down}>
            <IndexName>{name}</IndexName>
            <span>{price}</span>
            {[change, pct].map((v) => (
              <span key={v}>
                <Marker viewBox="0 0 10 16" aria-hidden="true">
                  <path d={down ? 'M1 0h8L6 16H4z' : 'M4 0h2l4 16H0z'} fill="currentColor" />
                </Marker>
                {v}
              </span>
            ))}
            <Amount>{amount}亿</Amount>
          </IndexGroup>
        ))}
      </Ticker>
      <News>
        <Help aria-label="帮助">
          <svg width="26" height="36" aria-hidden="true">
            <path d="M2 3h22v33H2z" fill="#e8b800" />
            <path d="M7 12c0-7 12-7 12 0 0 5-6 4-6 10" fill="none" stroke="#fff" strokeWidth="4" />
          </svg>
        </Help>
        <Flash>
          <svg width="24" height="36" aria-hidden="true">
            <path d="M3 20l4-4 2 4zM20 16l3 4h-4z" fill="#ffff50" />
          </svg>
        </Flash>
        <Headline href="#news">【大智慧超赢数据17:00播报】</Headline>
        <Headline href="#market">
          两市股指今日缩量窄幅震荡整理，沪创两市重新抵估量累客户，大国可法大市股价创新高，芯湖锂锂概念股午后量
        </Headline>
      </News>
    </Page>
  )
}

export default App
